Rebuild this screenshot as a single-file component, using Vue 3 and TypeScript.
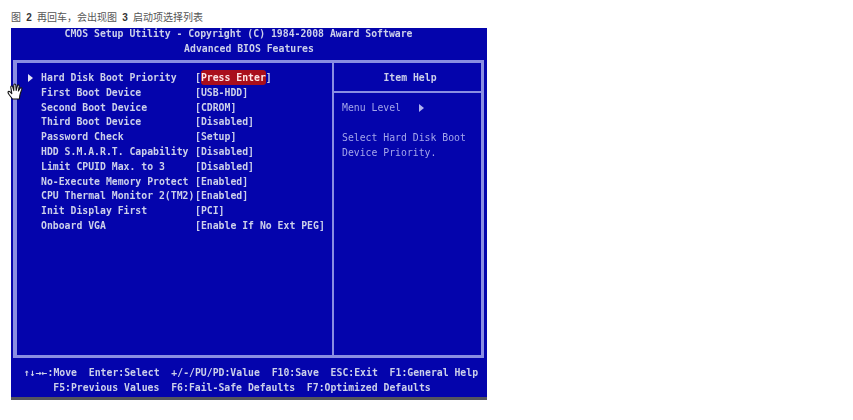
<script setup lang="ts">
interface BiosRow {
  label: string
  value: string
  arrow?: boolean
  active?: boolean
}

const rows: BiosRow[] = [
  { label: 'Hard Disk Boot Priority', value: 'Press Enter', arrow: true, active: true },
  { label: 'First Boot Device', value: 'USB-HDD' },
  { label: 'Second Boot Device', value: 'CDROM' },
  { label: 'Third Boot Device', value: 'Disabled' },
  { label: 'Password Check', value: 'Setup' },
  { label: 'HDD S.M.A.R.T. Capability', value: 'Disabled' },
  { label: 'Limit CPUID Max. to 3', value: 'Disabled' },
  { label: 'No-Execute Memory Protect', value: 'Enabled' },
  { label: 'CPU Thermal Monitor 2(TM2)', value: 'Enabled' },
  { label: 'Init Display First', value: 'PCI' },
  { label: 'Onboard VGA', value: 'Enable If No Ext PEG' },
]
</script>

<template>
  <div class="page">
    <p class="caption">图 <b>2</b> 再回车，会出现图 <b>3</b> 启动项选择列表</p>
    <div class="bios">
      <header class="title">
        <div class="copyright">CMOS Setup Utility - Copyright (C) 1984-2008 Award Software</div>
        <div>Advanced BIOS Features</div>
      </header>
      <div class="frame">
        <div class="settings">
          <div v-for="row in rows" :key="row.label" class="row">
            <span class="arrow"><i v-if="row.arrow" class="tri"></i></span>
            <span class="label">{{ row.label }}</span>
            <span class="value" :class="{ active: row.active }">[<em>{{ row.value }}</em>]</span>
          </div>
        </div>
        <aside class="help">
          <div class="help-head">Item Help</div>
          <div class="help-body">
            <div class="level">Menu Level<i class="tri"></i></div>
            <div class="desc">Select Hard Disk Boot<br />Device Priority.</div>
          </div>
        </aside>
      </div>
      <footer class="keys">
        <div class="keys-top">↑↓→←:Move&nbsp;&nbsp;Enter:Select&nbsp;&nbsp;+/-/PU/PD:Value&nbsp;&nbsp;F10:Save&nbsp;&nbsp;ESC:Exit&nbsp;&nbsp;F1:General Help</div>
        <div class="keys-bottom">F5:Previous Values&nbsp;&nbsp;F6:Fail-Safe Defaults&nbsp;&nbsp;F7:Optimized Defaults</div>
      </footer>
    </div>
    <svg class="hand" width="16" height="17" viewBox="0 0 16 17">
      <path
        d="M5.5 16 L2 11.5 C0.6 9.8 0.8 8.4 2 8.4 C3 8.4 3.8 9.6 4.8 10.6 L3.8 4.4 C3.6 2.8 5.4 2.6 5.8 4 L6.8 7.6 L6.8 2 C6.9 0.6 8.7 0.6 8.8 2 L9.2 7.4 L10.4 2.8 C10.8 1.4 12.4 1.8 12.2 3.2 L11.4 8 L13 5.4 C13.8 4.2 15.2 4.9 14.8 6.2 L13.2 11 C12.6 13 12.6 14.5 12.4 16 Z"
        fill="#fff"
        stroke="#151515"
        stroke-width="1.1"
        stroke-linejoin="round"
      />
    </svg>
  </div>
</template>

<style scoped>
.page {
  position: relative;
  width: 853px;
  height: 420px;
  background: #fff;
  padding: 11px 0 0 11px;
  box-sizing: border-box;
  overflow: hidden;
}
.caption {
  margin: 0;
  height: 17px;
  font: 10px/12px "Noto Sans CJK SC", sans-serif;
  word-spacing: 3px;
  color: #555;
}
.caption b { font: bold 10px "Liberation Sans", sans-serif; color: #333; }
.bios {
  width: 476px;
  height: 369px;
  background: #0404ac;
  border-bottom: 3px solid #55555e;
  color: #ccd0ea;
  font: bold 9.8px/14.8px "DejaVu Sans Mono", monospace;
  display: flex;
  flex-direction: column;
  filter: blur(0.45px);
}
.title {
  height: 32px;
  text-align: center;
}
.title div { line-height: 15px; }
.title .copyright { margin: -2px 0 0 -21px; }
.frame {
  flex: 1;
  margin: 0 3px 0 2px;
  display: flex;
  border: 3px solid #8a8ee2;
  border-left-width: 4px;
  min-height: 0;
}
.settings {
  width: 317px;
  padding-top: 8px;
  box-sizing: border-box;
  border-right: 2px solid #8a8ee2;
}
.row {
  display: flex;
  height: 14.8px;
  white-space: nowrap;
}
.arrow {
  width: 24px;
  padding-left: 11px;
  box-sizing: border-box;
  display: flex;
  align-items: center;
}
.label { width: 154px; }
.value em { font-style: normal; }
.value.active em {
  background: #a90f1c;
  color: #ffe6e6;
  border-radius: 3px;
  padding: 2px 0;
}
.tri {
  display: inline-block;
  border-left: 5px solid #e4e4f4;
  border-top: 4px solid transparent;
  border-bottom: 4px solid transparent;
}
.help { flex: 1; display: flex; flex-direction: column; }
.help-head {
  height: 30px;
  line-height: 30px;
  padding-left: 5px;
  text-align: center;
  border-bottom: 2px solid #8a8ee2;
  box-sizing: border-box;
}
.help-body {
  padding: 8px 0 0 8px;
  font-weight: normal;
  color: #a4a6ea;
}
.level {
  display: flex;
  align-items: center;
  gap: 18px;
  margin-bottom: 15px;
}
.level .tri { border-left-color: #b0b2f0; }
.keys {
  height: 39px;
  padding-top: 7px;
  box-sizing: border-box;
  text-align: center;
  white-space: nowrap;
}
.keys div { line-height: 15px; }
.keys-top { padding-left: 4px; }
.keys-bottom { padding-right: 14px; }
.hand {
  position: absolute;
  left: 7px;
  top: 83px;
}
</style>

<style>
html, body { margin: 0; background: #fff; }
</style>
